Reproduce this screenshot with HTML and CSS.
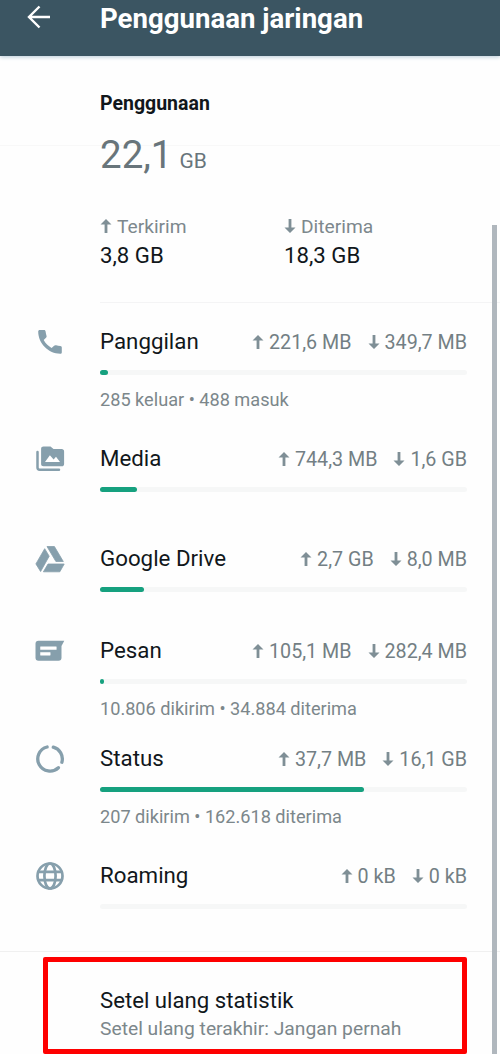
FILE: index.html
```html
<!DOCTYPE html>
<html lang="id">
<head>
<meta charset="utf-8">
<title>Penggunaan jaringan</title>
<link rel="stylesheet" href="styles.css">
</head>
<body>
<svg class="defs" width="0" height="0">
  <symbol id="up" viewBox="0 0 12 14"><path d="M6 0 11.500 5.600H7.400V14H4.600V5.600H.5z" fill="currentColor"/></symbol>
  <symbol id="down" viewBox="0 0 12 14"><path d="M6 14 11.500 8.400H7.400V0H4.600V8.400H.5z" fill="currentColor"/></symbol>
</svg>
<div class="screen">
  <header class="appbar">
    <svg class="back" viewBox="0 0 24 24" fill="none" stroke="#fff" stroke-width="2.400"><path d="M23 12H2.500M12.500 1.500 2 12l10.500 10.500"/></svg>
    <h1 class="title">Penggunaan jaringan</h1>
  </header>
  <main>
    <section class="summary">
      <div class="usage-head"><h2 class="heading">Penggunaan</h2></div>
      <div class="total"><span class="total-num">22,1</span><span class="total-unit">GB</span></div>
      <div class="totals">
        <div><div class="dir"><svg class="arrow"><use href="#up"/></svg><span>Terkirim</span></div><div class="amount">3,8 GB</div></div>
        <div><div class="dir"><svg class="arrow"><use href="#down"/></svg><span>Diterima</span></div><div class="amount">18,3 GB</div></div>
      </div>
    </section>
    <section class="list">
      <div class="row row-calls">
        <svg class="icon" viewBox="0 0 30 30"><path d="M4.800 3h4.200c1 0 1.500.6 1.600 1.500.2 1.600.5 3 .9 4.300.3.800.1 1.400-.5 1.900l-2.300 2.400c1.900 3.500 4.400 6 7.900 7.900l2.500-2.300c.6-.6 1.200-.7 2-.4 1.300.4 2.700.7 4.200.8 1 .1 1.500.7 1.500 1.600v4.500c0 1-.6 1.600-1.600 1.600C13.500 26.800 3.200 16.500 3.200 4.600 3.200 3.600 3.800 3 4.800 3z" fill="currentColor"/></svg>
        <div class="body">
          <div class="line"><span class="name">Panggilan</span><span class="stat"><svg class="arrow"><use href="#up"/></svg><span>221,6 MB</span></span><span class="stat"><svg class="arrow"><use href="#down"/></svg><span>349,7 MB</span></span></div>
          <div class="track"><div class="fill" style="width:7.500px"></div></div>
          <div class="note">285 keluar • 488 masuk</div>
        </div>
      </div>
      <div class="row row-media">
        <svg class="icon" viewBox="0 0 30 30"><path d="M2.500 8v15.500c0 1.500.7 2.200 2.200 2.200H24" fill="none" stroke="currentColor" stroke-width="2.500" stroke-linecap="round"/><path d="M8.500 2.500h7l3 2.600h8.200c1.400 0 2.400.9 2.400 2.300v12.500c0 1.400-1 2.300-2.400 2.300H8.500c-1.400 0-2.400-1-2.400-2.300V4.800c0-1.400 1-2.300 2.400-2.300z" fill="currentColor"/><path d="M10 18l4.900-6.800 3.700 4.400 2.400-2.900L25 18z" fill="#fff"/></svg>
        <div class="body">
          <div class="line"><span class="name">Media</span><span class="stat"><svg class="arrow"><use href="#up"/></svg><span>744,3 MB</span></span><span class="stat"><svg class="arrow"><use href="#down"/></svg><span>1,6 GB</span></span></div>
          <div class="track"><div class="fill" style="width:37px"></div></div>
        </div>
      </div>
      <div class="row row-drive">
        <svg class="icon" viewBox="0 0 30 30"><g fill="currentColor" stroke="currentColor" stroke-width=".8" stroke-linejoin="round"><path d="M9.700 4.700 14.200 12.200 5.600 27.500.9 19.900z"/><path d="M12 2.500h7.400l8.900 15h-7.400z"/><path d="M13 20h16.200l-4.400 7.800H8.400z"/></g></svg>
        <div class="body">
          <div class="line"><span class="name">Google Drive</span><span class="stat"><svg class="arrow"><use href="#up"/></svg><span>2,7 GB</span></span><span class="stat"><svg class="arrow"><use href="#down"/></svg><span>8,0 MB</span></span></div>
          <div class="track"><div class="fill" style="width:44px"></div></div>
        </div>
      </div>
      <div class="row row-messages">
        <svg class="icon" viewBox="0 0 30 30"><path d="M4 4.800h25.300L26.500 10v11.700c0 2-1 3-3 3H3.500c-2 0-3-1-3-3V7.800c0-2 1-3 3-3z" fill="currentColor"/><path d="M5.500 10.800h15.800v2.700H5.500zM5.500 16.500h9.700v2.700H5.500z" fill="#fff" stroke="#fff" stroke-width=".5"/></svg>
        <div class="body">
          <div class="line"><span class="name">Pesan</span><span class="stat"><svg class="arrow"><use href="#up"/></svg><span>105,1 MB</span></span><span class="stat"><svg class="arrow"><use href="#down"/></svg><span>282,4 MB</span></span></div>
          <div class="track"><div class="fill" style="width:4px"></div></div>
          <div class="note">10.806 dikirim • 34.884 diterima</div>
        </div>
      </div>
      <div class="row row-status">
        <svg class="icon" viewBox="0 0 30 30" fill="none" stroke="currentColor" stroke-width="3.300" stroke-linecap="round"><path d="M12.100 3a12.200 12.200 0 1 0 11.300 20.700M18.300 3.200A12.200 12.200 0 0 1 26.900 18.200"/></svg>
        <div class="body">
          <div class="line"><span class="name">Status</span><span class="stat"><svg class="arrow"><use href="#up"/></svg><span>37,7 MB</span></span><span class="stat"><svg class="arrow"><use href="#down"/></svg><span>16,1 GB</span></span></div>
          <div class="track"><div class="fill" style="width:264px"></div></div>
          <div class="note">207 dikirim • 162.618 diterima</div>
        </div>
      </div>
      <div class="row row-roaming">
        <svg class="icon" viewBox="0 0 30 30" fill="none" stroke="currentColor" stroke-width="2.700"><circle cx="15" cy="15" r="12.500"/><ellipse cx="15" cy="15" rx="5.600" ry="12.500"/><path d="M3.500 10.800h23M3.500 19.200h23"/></svg>
        <div class="body">
          <div class="line"><span class="name">Roaming</span><span class="stat"><svg class="arrow"><use href="#up"/></svg><span>0 kB</span></span><span class="stat"><svg class="arrow"><use href="#down"/></svg><span>0 kB</span></span></div>
          <div class="track"></div>
        </div>
      </div>
    </section>
    <section class="reset">
      <div class="reset-name">Setel ulang statistik</div>
      <div class="reset-note">Setel ulang terakhir: Jangan pernah</div>
    </section>
  </main>
  <div class="scrollbar"></div>
</div>
</body>
</html>
```
FILE: styles.css
```css
* { box-sizing: border-box; }
body { margin: 0; background: #fefefe; font-family: Roboto, "Liberation Sans", sans-serif; color: #11171b; }
h1, h2 { margin: 0; }
.defs { display: block; }
.screen { position: relative; width: 500px; height: 1054px; overflow: hidden; }
.appbar { display: flex; align-items: flex-start; height: 56px; background: #3b5562; color: #fff; box-shadow: 0 1px 4px #b9cbd8; }
.back { width: 24px; height: 24px; margin: 5px 48px 0 27px; }
.title { font-size: 27.600px; font-weight: 700; line-height: 38px; margin-left: 1px; white-space: nowrap; }
.summary { height: 247px; padding-left: 100px; display: flex; flex-direction: column; }
.usage-head { height: 90px; margin-left: -100px; padding: 36px 0 0 100px; border-bottom: 1px solid #f8f8f8; }
.heading { font-size: 19.500px; line-height: 24px; font-weight: 700; }
.total { display: flex; align-items: baseline; gap: 8px; height: 67px; color: #68757b; line-height: 18px; }
.total-num { font-size: 38.500px; }
.total-unit { font-size: 21px; margin-left: -1px; }
.totals { flex: 1; display: grid; grid-template-columns: 184px 1fr; border-bottom: 1px solid #f4f4f5; }
.dir { display: flex; align-items: center; gap: 5px; height: 26px; font-size: 19.200px; color: #7d888d; }
.amount { font-size: 22.200px; line-height: 32px; }
.arrow { width: 12px; height: 14px; flex: none; color: #7f8f96; margin-bottom: 1px; }
.list { padding-top: 24px; border-bottom: 1px solid #f0f0f0; height: 649px; }
.row { display: flex; color: #11171b; }
.icon { width: 30px; height: 30px; margin: 0 35px; flex: none; color: #869fac; }
.body { width: 367px; }
.line { display: flex; align-items: center; height: 30px; }
.name { flex: 1; font-size: 22.300px; margin-top: -3px; }
.stat { display: flex; align-items: center; gap: 5px; margin-left: 16px; font-size: 19.700px; color: #737f84; }
.track { height: 5px; margin-top: 13px; border-radius: 3px; background: #f6f7f7; }
.fill { height: 5px; border-radius: 3px; background: #16a17f; }
.note { margin-top: 13px; font-size: 18.150px; line-height: 24px; color: #7c878b; }
.row-calls, .row-status { height: 117px; }
.row-media { height: 100px; }
.row-drive { height: 92px; }
.row-messages { height: 108px; }
.reset { width: 424px; height: 97px; margin: 5px 0 0 43px; padding: 23px 0 0 52px; border: 5px solid #fe0000; border-radius: 2px; }
.reset-name { font-size: 22.200px; line-height: 30px; }
.reset-note { font-size: 19.250px; line-height: 28px; color: #7c878b; }
.scrollbar { position: absolute; left: 492px; top: 225px; width: 5px; bottom: 0; background: #b0b7bd; }
```
